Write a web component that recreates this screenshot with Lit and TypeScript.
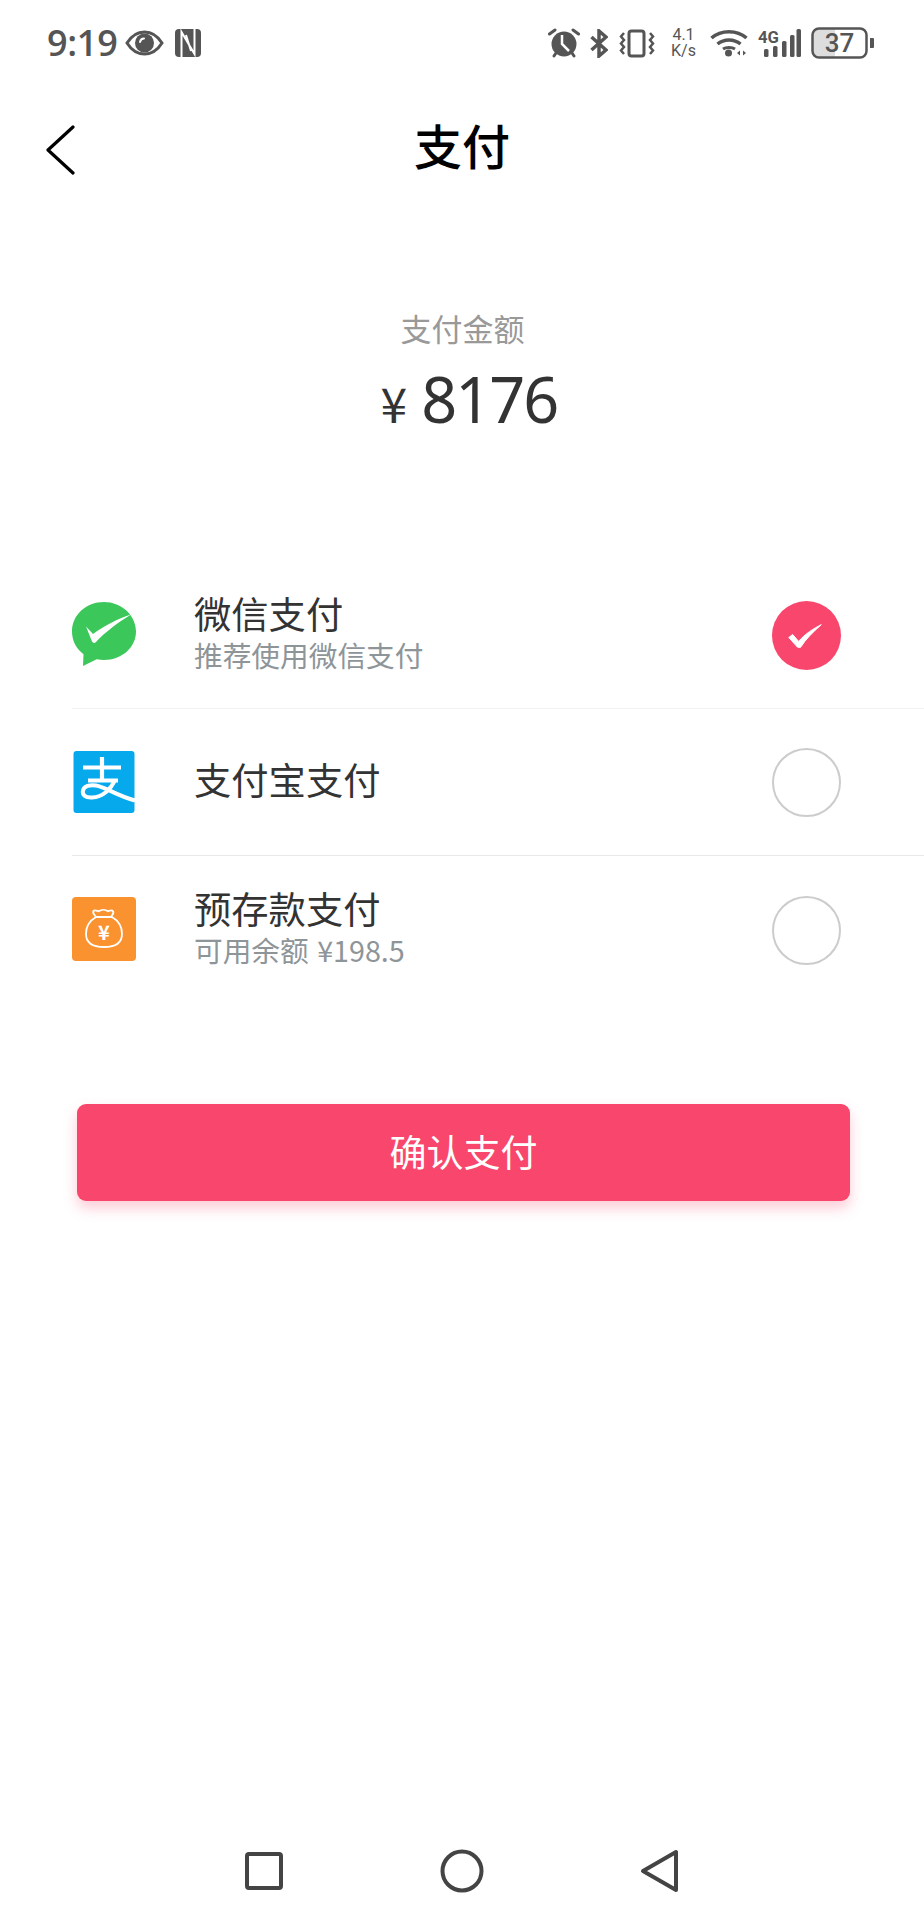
import { LitElement, html, css, svg } from "lit";
import { customElement } from "lit/decorators.js";

const wechat = html`<svg class="pay" viewBox="0 0 64 64" width="64" height="64">
  <path fill="#3cc75a" d="M32 0C14 0 0 13 0 29.500c0 9.300 4.500 17.500 11.500 22.700L11 64l13.700-6.800c2.300.5 4.800.8 7.300.8 18 0 32-12.800 32-28.500S50 0 32 0z"/>
  <path fill="#fff" d="M14 24.500l7 7.500c11-8 24-15 38-19.500C47 20 33 30 24 40c-1.500 1.500-3 1-4-.5z"/>
</svg>`;

const alipay = html`<svg class="pay" viewBox="0 0 64 64" width="64" height="64">
  <rect x="1.500" y="1" width="61" height="62" rx="3" fill="#06a9ec"/>
  <g fill="none" stroke="#fff" stroke-width="4.200">
    <path d="M11 17.500H49M30 7v23M16 30.500H46"/>
    <path stroke-width="4" d="M43 30c-4 9-12 17-23 17.500-7 .4-10-3-9-7 1-4.500 7-6 13-5 10 1.700 20 10 39 15"/>
  </g>
</svg>`;

const wallet = html`<svg class="pay" viewBox="0 0 64 64" width="64" height="64">
  <rect x="0" y="0" width="64" height="64" rx="4" fill="#fb9230"/>
  <g fill="none" stroke="#fff" stroke-width="1.800">
    <path d="M24 20c-1.500-2.500-4-4-2.500-6 1.500-1.500 3.500 0 5 .3 3-2 7-2 9.500 0 2-1 4-1.600 5-.1 1.500 2-1 3.500-2 5.800"/>
    <path d="M24 20h16c6 3.500 10 10 10 17 0 9-7 13-18 13s-18-4-18-13c0-7 4-13.500 10-17z"/>
  </g>
  <text x="32" y="43" text-anchor="middle" fill="#fff" font-size="20" font-weight="700" font-family="Noto Sans CJK SC, sans-serif">¥</text>
</svg>`;

const check = svg`<path fill="#fff" stroke="#fff" stroke-width="1" stroke-linejoin="round" d="M17 37l4-3 6 7c7-8 15-13 23-17-8 7-16 15-21 23h-3z"/>`;

const rows = [
  { icon: wechat, title: "微信支付", sub: "推荐使用微信支付", on: true },
  { icon: alipay, title: "支付宝支付", sub: "", on: false },
  { icon: wallet, title: "预存款支付", sub: "可用余额 ¥198.5", on: false },
];

@customElement("app-root")
export class AppRoot extends LitElement {
  static styles = css`
    :host {
      display: flex;
      flex-direction: column;
      width: 924px;
      height: 1920px;
      background: #fff;
      font-family: "Noto Sans CJK SC", "Noto Sans", sans-serif;
      color: #333;
    }
    .status {
      display: flex;
      align-items: center;
      height: 86px;
      padding: 0 50px 0 47px;
      color: #555;
      box-sizing: border-box;
    }
    .time {
      font: 600 36px/1 "Open Sans", sans-serif;
      color: #555;
      width: 72px;
      letter-spacing: -0.3px;
    }
    .spacer { flex: 1; }
    .status svg { display: block; flex: none; }
    .eye { margin-left: 6px; }
    .nfc { margin-left: 11px; }
    .bt { margin-left: 10px; }
    .vib { margin-left: 11px; }
    .speed {
      margin-left: 14px;
      width: 29px;
      font: 400 16px/16px "Roboto", sans-serif;
      text-align: center;
      color: #555;
    }
    .wifi { margin-left: 12px; }
    .sig { margin-left: 10px; }
    .batt { margin-left: 10px; }
    .header {
      position: relative;
      height: 116px;
      display: flex;
      align-items: center;
      justify-content: center;
    }
    .back { position: absolute; left: 45px; top: 39px; }
    .title {
      font-size: 48px;
      font-weight: 500;
      color: #000;
      line-height: 1;
    }
    .amount-box {
      display: flex;
      flex-direction: column;
      align-items: center;
      padding-top: 104px;
    }
    .label { font-size: 31px; line-height: 44px; color: #999; padding-left: 1px; }
    .amount {
      display: flex;
      align-items: baseline;
      line-height: 90px;
      color: #333;
      margin-top: 4px;
      padding-left: 14px;
    }
    .yen { font-size: 48px; margin-right: 14px; }
    .num { font: 400 63px/90px "Noto Sans", sans-serif; letter-spacing: -2px; }
    .list { margin: 114px 0 0 72px; }
    .row {
      display: flex;
      align-items: center;
      height: 147.500px;
      padding-right: 83px;
      box-sizing: border-box;
      border-bottom: 1px solid #e9e9e9;
    }
    .row:first-child { border-bottom-color: #f2f2f2; }
    .row:last-child { border-bottom-color: transparent; }
    .pay { flex: none; display: block; }
    .text { flex: 1; margin-left: 58px; padding-bottom: 5px; }
    .t { font-size: 37.300px; line-height: 44px; color: #333; }
    .s { font-size: 28.700px; line-height: 36px; color: #8e9599; margin-top: 2px; word-spacing: 2px; }
    .radio {
      flex: none;
      width: 69px;
      height: 69px;
      margin-top: 2px;
      border-radius: 50%;
      border: 2px solid #ccc;
      box-sizing: border-box;
    }
    .radio.on { border: none; background: #f9466d; }
    .radio svg { display: block; }
    .btn {
      margin: 100px 74px 0 77px;
      height: 97px;
      padding-bottom: 3px;
      box-sizing: border-box;
      background: #f9466d;
      border-radius: 9px;
      color: #fff;
      font-size: 37px;
      display: flex;
      align-items: center;
      justify-content: center;
      box-shadow: 0 7px 14px rgba(249, 70, 109, 0.28);
    }
    .nav {
      margin-top: auto;
      height: 74px;
      display: flex;
      align-items: flex-start;
      justify-content: center;
      padding-top: 2px;
      box-sizing: border-box;
    }
    .nav svg { display: block; }
  `;

  render() {
    return html`
      <div class="status">
        <div class="time">9:19</div>
        <svg class="eye" width="39" height="28" viewBox="0 0 39 28">
          <path fill="none" stroke="#555" stroke-width="3" d="M2 14C7 6 13 3 19.500 3S32 6 37 14c-5 8-11 11-17.500 11S7 22 2 14z"/>
          <circle cx="19.500" cy="14" r="9.500" fill="#555"/>
          <path fill="none" stroke="#fff" stroke-width="2" stroke-linecap="round" d="M15 13c.5-2.500 2-3.500 4-3.500"/>
        </svg>
        <svg class="nfc" width="26" height="28" viewBox="0 0 26 28">
          <rect x="0" y="0" width="26" height="28" rx="4" fill="#555"/>
          <path fill="none" stroke="#fff" stroke-width="2" d="M6.500 28V3l13 22V0M11 6l5 16"/>
        </svg>
        <div class="spacer"></div>
        <svg width="32" height="30" viewBox="0 0 32 30">
          <circle cx="16" cy="16" r="12.500" fill="#555"/>
          <path fill="none" stroke="#fff" stroke-width="2.500" d="M14 7v9l7 7"/>
          <path fill="none" stroke="#555" stroke-width="3" stroke-linecap="round" d="M1.500 6L7 2M30.500 6L25 2M6 28l2-3M26 28l-2-3"/>
        </svg>
        <svg class="bt" width="18" height="29" viewBox="0 0 18 29">
          <path fill="none" stroke="#555" stroke-width="3.500" d="M1.500 8L16 21 9 27V2l7 6L1.500 21"/>
        </svg>
        <svg class="vib" width="36" height="29" viewBox="0 0 36 29">
          <rect x="10" y="2" width="15" height="25" rx="2.500" fill="none" stroke="#555" stroke-width="3"/>
          <path fill="none" stroke="#555" stroke-width="2.500" d="M5 4L2 7.500 5 11 2 14.500 5 18 2 21.500 5 25M31 4l3 3.500L31 11l3 3.500L31 18l3 3.500L31 25"/>
        </svg>
        <div class="speed">4.1<br />K/s</div>
        <svg class="wifi" width="38" height="28" viewBox="0 0 38 28">
          <g fill="none" stroke="#555" stroke-width="3.500">
            <path d="M1.500 9C11 .5 27 .5 36.500 9"/>
            <path d="M7.500 15c6.500-5.500 16.500-5.500 23 0"/>
          </g>
          <path fill="none" stroke="#555" stroke-width="3" d="M13 20c3-2 9-2 12 0"/>
          <circle cx="18.500" cy="24" r="3.500" fill="#555"/>
          <path fill="#555" d="M27 24l3-2.500v5zM33 21.500l3 2.500-3 2.500z"/>
        </svg>
        <svg class="sig" width="43" height="30" viewBox="0 0 43 30">
          <text x="0" y="15" font-size="16" font-weight="700" fill="#555" font-family="Roboto, sans-serif" textLength="21" lengthAdjust="spacingAndGlyphs">4G</text>
          <g fill="#555">
            <rect x="6" y="21" width="4.500" height="8" rx="1.500"/>
            <rect x="15" y="18" width="4.500" height="11" rx="1.500"/>
            <rect x="24" y="13" width="4.500" height="16" rx="1.500"/>
            <rect x="32" y="7" width="4.500" height="22" rx="1.500"/>
            <rect x="38.500" y="1" width="4.500" height="28" rx="1.500"/>
          </g>
        </svg>
        <svg class="batt" width="63" height="32" viewBox="0 0 63 32">
          <rect x="2" y="2" width="53" height="28" rx="6" fill="#fff"/>
          <path fill="#ddd" d="M8 2h16v28H8a6 6 0 0 1-6-6V8a6 6 0 0 1 6-6z"/>
          <rect x="1.500" y="1.500" width="54" height="29" rx="6.500" fill="none" stroke="#555" stroke-width="2.500"/>
          <path fill="#555" d="M59 11h3a1 1 0 0 1 1 1v8a1 1 0 0 1-1 1h-3z"/>
          <text x="28.500" y="25" text-anchor="middle" font-size="26" font-weight="500" fill="#555" font-family="Roboto, sans-serif">37</text>
        </svg>
      </div>

      <div class="header">
        <svg class="back" width="30" height="50" viewBox="0 0 30 50">
          <path fill="none" stroke="#000" stroke-width="3.200" stroke-linecap="round" stroke-linejoin="round" d="M28 2L3 25l25 23"/>
        </svg>
        <div class="title">支付</div>
      </div>

      <div class="amount-box">
        <div class="label">支付金额</div>
        <div class="amount"><span class="yen">¥</span><span class="num">8176</span></div>
      </div>

      <div class="list">
        ${rows.map(
          (r) => html`<div class="row">
            ${r.icon}
            <div class="text">
              <div class="t">${r.title}</div>
              ${r.sub ? html`<div class="s">${r.sub}</div>` : ""}
            </div>
            ${r.on
              ? html`<div class="radio on"><svg width="69" height="69" viewBox="0 0 70 70">${check}</svg></div>`
              : html`<div class="radio"></div>`}
          </div>`
        )}
      </div>

      <div class="btn">确认支付</div>

      <div class="nav">
        <svg width="440" height="46" viewBox="0 0 440 46">
          <g fill="none" stroke="#444" stroke-width="4" stroke-linejoin="round">
            <rect x="5" y="6" width="34" height="34" rx="2"/>
            <circle cx="220" cy="23" r="19.500"/>
            <path d="M434 4v38L401 23z"/>
          </g>
        </svg>
      </div>
    `;
  }
}
